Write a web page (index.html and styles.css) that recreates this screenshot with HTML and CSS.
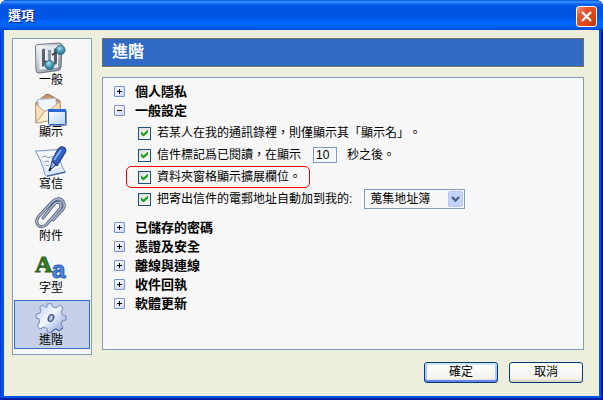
FILE: index.html
```html
<!DOCTYPE html>
<html lang="zh-Hant">
<head>
<meta charset="UTF-8">
<meta name="viewport" content="width=device-width, initial-scale=1.0">
<title>選項</title>
<link rel="stylesheet" href="styles.css">
</head>
<body>
<div class="window">
    <header class="titlebar">
        <h1>選項</h1>
        <button type="button" class="close" aria-label="關閉">
            <svg width="13" height="13" viewBox="0 0 13 13"><path d="M2 2L11 11M11 2L2 11" stroke="#fff" stroke-width="2.4"/></svg>
        </button>
    </header>

    <div class="content">
        <nav class="sidebar">
            <button type="button" class="category">
                <svg width="32" height="32" viewBox="0 0 32 32">
                    <defs>
                        <linearGradient id="metal" x1="0" y1="0" x2="1" y2="1"><stop offset="0" stop-color="#fff"/><stop offset=".5" stop-color="#b9bfca"/><stop offset="1" stop-color="#7c8494"/></linearGradient>
                        <radialGradient id="ball" cx=".4" cy=".3" r=".7"><stop offset="0" stop-color="#b5e2ee"/><stop offset=".5" stop-color="#4fa3bd"/><stop offset="1" stop-color="#2b7592"/></radialGradient>
                    </defs>
                    <path d="M3 2.5L24 1Q27 1 27 4L26 25Q26 28 23 28.5L4 31Q1 31 1 28L.5 5Q.5 3 3 2.5Z" fill="url(#metal)" stroke="#6b7180"/>
                    <path d="M5 5.5L23 4.5 22.5 25 5 27Z" fill="#dfe3ea" stroke="#f6f7fa"/>
                    <path d="M7 9Q7 6 10 7V22Q9 26 7 24ZM19 7Q22 5 22 8V21Q21 24 19 22Z" fill="#596070"/>
                    <path d="M13 8H16V20H13Z" fill="#8f96a5"/>
                    <path d="M11 8V21M17 12V20" stroke="#fff"/>
                    <path d="M17 13L22 10M10 19L13 21" stroke="#383e4a" stroke-width="2"/>
                    <circle cx="25.5" cy="8" r="4.5" fill="url(#ball)" stroke="#2e6a82"/>
                    <circle cx="14.5" cy="23" r="4.5" fill="url(#ball)" stroke="#2e6a82"/>
                </svg>
                <span>一般</span>
            </button>
            <button type="button" class="category">
                <svg width="32" height="32" viewBox="0 0 32 32">
                    <defs>
                        <linearGradient id="pane" x1="0" y1="0" x2="1" y2="1"><stop offset="0" stop-color="#fff"/><stop offset="1" stop-color="#b7d3fa"/></linearGradient>
                    </defs>
                    <path d="M.5 9L11 .5Q13 0 15 1L25 7 25.5 24 1 29Z" fill="#c39472" stroke="#a06f4c"/>
                    <path d="M2.5 5.5L20.5 4.5 23 19 5 22Z" fill="#eef5ff" stroke="#b1c5e3"/>
                    <path d="M.5 9.5L11 19 25 7.5 25.500 25 1 29Z" fill="#f8e0be" stroke="#cf9c6c"/>
                    <path d="M1 28.5L9.5 17.5 13 16 25 24" fill="#fff0d6" stroke="#c99968"/>
                    <path d="M14 31.5H31.5V17" fill="none" stroke="#8a90a0"/>
                    <rect x="13.5" y="15.5" width="17" height="15" rx="1" fill="url(#pane)" stroke="#2464c8"/>
                    <path d="M13 16.5H31" stroke="#2869d6" stroke-width="3"/>
                </svg>
                <span>顯示</span>
            </button>
            <button type="button" class="category">
                <svg width="32" height="32" viewBox="0 0 32 32">
                    <path d="M.5 5L24 3.5Q24 17 30.5 26.5L12 30.5Q9 29 8.5 23 6 14 .5 5Z" fill="#dbe7ff" stroke="#7f98c6"/>
                    <path d="M2 6L22 5Q22 14 26 21L13 25Q9 15 2 6Z" fill="#f8fbff"/>
                    <path d="M12 30L30 26" stroke="#344f86"/>
                    <path d="M7 11Q11 9 12 11T18 10M9 16Q12 14 14 16M11 20L14 19" fill="none" stroke="#7f8cab"/>
                    <path d="M17 14L23 3Q26-1 30 2 32 4 30 7L22 20Z" fill="#2f60c4" stroke="#1b3377"/>
                    <path d="M19 14L26 4" stroke="#88b3f5" stroke-width="2"/>
                    <path d="M17 15L21 19 14.5 24.5Z" fill="#8eaee6" stroke="#253b70"/>
                    <path d="M14 25L16 22" stroke="#111d3d" stroke-width="2"/>
                </svg>
                <span>寫信</span>
            </button>
            <button type="button" class="category">
                <svg width="32" height="32" viewBox="0 0 32 32">
                    <g fill="none" stroke-linecap="round">
                        <path d="M8 20L19 6Q22 3 25 5 27 8 25 11L12 26Q7 31 3 27 0 23 4 18L17 4Q22-1 27 2 31 6 28 11L18 22" stroke="#48536e" stroke-width="3"/>
                        <path d="M8 20L19 6Q22 3 25 5 27 8 25 11L12 26Q7 31 3 27 0 23 4 18L17 4Q22-1 27 2 31 6 28 11L18 22" stroke="#a7b5d1" stroke-width="1.6"/>
                    </g>
                </svg>
                <span>附件</span>
            </button>
            <button type="button" class="category">
                <svg width="32" height="32" viewBox="0 0 32 32">
                    <text class="letter-serif" x="0" y="22">A</text>
                    <text class="letter-sans" x="17" y="28">a</text>
                </svg>
                <span>字型</span>
            </button>
            <button type="button" class="category selected" aria-current="page">
                <svg width="32" height="32" viewBox="0 0 32 32">
                    <defs>
                        <linearGradient id="gear" x1="0" y1="0" x2="1" y2="1"><stop offset="0" stop-color="#b9cdf2"/><stop offset=".45" stop-color="#f2f7ff"/><stop offset="1" stop-color="#7d98d3"/></linearGradient>
                    </defs>
                    <path d="M12 2L16 1.5 18 5 21 6 25 3 28 6 26 10 27.500 13 31 14 31 18 27 19 26 22 28 26 24 29 21 26.5 18 28 16 31 12.5 30 12 26.5 9 25 5 27 2.5 24 4.5 20 4 17 1 16 1.5 12 5 11 6 8.5 4.5 5 8 3 10.5 5.5 12 5Z" fill="url(#gear)" stroke="#7589be" stroke-linejoin="round"/>
                    <path d="M28 26L24 29 21 27 18 28.500 16 31" fill="none" stroke="#465b93"/>
                    <ellipse cx="16" cy="16" rx="2.500" ry="3.500" transform="rotate(25 16 16)" fill="#b9c7e8" stroke="#4e5d86" stroke-width="1.500"/>
                </svg>
                <span>進階</span>
            </button>
        </nav>

        <main class="main">
            <h2 class="heading">進階</h2>
            <div class="panel">
                <details>
                    <summary>個人隱私</summary>
                </details>
                <details open>
                    <summary>一般設定</summary>
                    <div class="settings">
                        <div class="setting">
                            <input type="checkbox" id="displayName" checked>
                            <label for="displayName">若某人在我的通訊錄裡，則僅顯示其「顯示名」。</label>
                        </div>
                        <div class="setting">
                            <input type="checkbox" id="markRead" checked>
                            <label for="markRead">信件標記爲已閱讀，在顯示</label>
                            <input type="text" class="seconds" id="seconds" value="10">
                            <label for="seconds">秒之後。</label>
                        </div>
                        <div class="setting highlight">
                            <input type="checkbox" id="extColumns" checked>
                            <label for="extColumns">資料夾窗格顯示擴展欄位。</label>
                        </div>
                        <div class="setting">
                            <input type="checkbox" id="collect" checked>
                            <label for="collect">把寄出信件的電郵地址自動加到我的:</label>
                            <select class="book" aria-label="地址簿">
                                <option>蒐集地址簿</option>
                            </select>
                        </div>
                    </div>
                </details>
                <details>
                    <summary>已儲存的密碼</summary>
                </details>
                <details>
                    <summary>憑證及安全</summary>
                </details>
                <details>
                    <summary>離線與連線</summary>
                </details>
                <details>
                    <summary>收件回執</summary>
                </details>
                <details>
                    <summary>軟體更新</summary>
                </details>
            </div>
            <div class="actions">
                <button type="button" class="btn default">確定</button>
                <button type="button" class="btn">取消</button>
            </div>
        </main>
    </div>
</div>
</body>
</html>
```

FILE: styles.css
```css
* {
    box-sizing: border-box;
}
body {
    margin: 0;
    background: #fff;
    color: #000;
    font: 12px/14px "Liberation Sans", "Noto Sans CJK TC", sans-serif;
    text-spacing-trim: space-all;
}
button, input, select {
    margin: 0;
    font: inherit;
    color: inherit;
}
.window {
    display: flex;
    flex-direction: column;
    min-height: 100vh;
    padding: 0 4px 4px;
    border-radius: 7px 7px 0 0;
    background: #0054e3;
    box-shadow: inset 1px 0 #0831d9, inset -1px 0 #00138c, inset -2px -2px #001ea0;
}

/* title bar */
.titlebar {
    display: flex;
    align-items: center;
    justify-content: space-between;
    height: 30px;
    margin: 0 -4px;
    padding: 2px 6px 0 8px;
    border-radius: 7px 7px 0 0;
    background: linear-gradient(#0058e0 0, #3a93ff 2px, #0a62f0 4px, #0053e1 7px, #0055e5 18px, #0066ff 22px, #0062f8 27px, #0046cc 30px);
}
.titlebar h1 {
    margin: 0;
    font-size: 13px;
    line-height: 18px;
    color: #fff;
    text-shadow: 1px 1px #0a1883;
}
.close {
    display: flex;
    align-items: center;
    justify-content: center;
    width: 21px;
    height: 21px;
    padding: 0;
    border: 1px solid #fff;
    border-radius: 3px;
    background: linear-gradient(135deg, #f0a088 0, #e5532c 30%, #dc4416 70%, #b83010 100%);
}

.content {
    display: flex;
    flex: 1;
    align-items: flex-start;
    gap: 10px;
    padding: 8px 15px 8px 8px;
    background: #eeeedd;
}

/* category list */
.sidebar {
    display: flex;
    flex-direction: column;
    gap: 3px;
    flex: none;
    width: 80px;
    padding: 1px 1px 5px;
    border: 1px solid #7f9db9;
    background: #f7f7f7;
}
.category {
    display: flex;
    flex-direction: column;
    align-items: center;
    height: 49px;
    padding: 1px 2px 0 0;
    border: 1px solid transparent;
    background: none;
}
.category svg {
    display: block;
    flex: none;
    overflow: visible;
}
.category span {
    line-height: 12px;
}
.category.selected {
    border-color: #316ac5;
    background: #c5cfe8;
}
.letter-serif {
    font: bold 24px "Liberation Serif", serif;
    fill: #398025;
    stroke: #2a6320;
}
.letter-sans {
    font: bold 24px "Liberation Sans", sans-serif;
    fill: #4f8deb;
    stroke: #2659b3;
}

/* right hand side */
.main {
    flex: 1;
    min-width: 0;
}
.heading {
    margin: 0 0 10px;
    padding: 1px 9px 3px;
    border: 1px solid #716f64;
    box-shadow: 0 1px #fff;
    background: #316ac5;
    color: #fff;
    font-size: 16px;
    line-height: 23px;
}
.panel {
    min-height: 273px;
    padding: 4px 11px;
    border: 1px solid #7f9db9;
    background: #f7f7f7;
}
summary {
    display: flex;
    align-items: center;
    gap: 10px;
    font-size: 13px;
    font-weight: bold;
    line-height: 19px;
}
summary::before {
    content: "";
    width: 9px;
    height: 9px;
    border: 1px solid #7b93cd;
    border-radius: 1px;
    background:
        linear-gradient(#000, #000) center / 5px 1px no-repeat,
        linear-gradient(#000, #000) center / 1px 5px no-repeat,
        linear-gradient(135deg, #fff, #cdd6f0);
}
details[open] > summary::before {
    background:
        linear-gradient(#000, #000) center / 5px 1px no-repeat,
        linear-gradient(135deg, #fff, #cdd6f0);
}
.settings {
    display: flex;
    flex-direction: column;
    align-items: flex-start;
    padding: 2px 0 8px 12px;
}
.setting {
    display: flex;
    align-items: center;
    height: 22px;
    padding: 0 8px 0 11px;
    border: 1px solid transparent;
    border-radius: 5px;
    white-space: nowrap;
}
.setting.highlight {
    border-color: #f00;
}
.setting input[type="checkbox"] {
    appearance: none;
    width: 13px;
    height: 13px;
    margin-right: 6px;
    border: 1px solid #1c5180;
    background: linear-gradient(135deg, #dcdcd7, #fff);
}
.setting input[type="checkbox"]:checked::before {
    content: "";
    display: block;
    width: 7px;
    height: 7px;
    margin: 2px;
    background: #21a121;
    clip-path: polygon(0 28%, 36% 58%, 100% 0, 100% 42%, 36% 100%, 0 72%);
}
.seconds {
    width: 24px;
    height: 16px;
    margin: 0 10px 0 12px;
    padding: 0 2px;
    border: 1px solid #7f9db9;
    background: #f7f7f7;
}
.book {
    appearance: none;
    width: 101px;
    height: 20px;
    margin-left: 12px;
    padding: 0 20px 0 5px;
    border: 1px solid #7f9db9;
    background:
        url("data:image/svg+xml,%3Csvg xmlns='http://www.w3.org/2000/svg' width='15' height='16'%3E%3Crect x='.5' y='.5' width='14' height='15' rx='1' fill='%23c3d3fd' stroke='%23b4c8f6'/%3E%3Cpath d='M4 6l3.5 3.5L11 6' fill='none' stroke='%234d6185' stroke-width='2.4'/%3E%3C/svg%3E") right 1px center no-repeat,
        #f7f7f7;
}

.actions {
    display: flex;
    justify-content: flex-end;
    gap: 11px;
    padding: 12px 1px 0 0;
}
.btn {
    width: 74px;
    height: 21px;
    padding: 0 0 2px;
    border: 1px solid #003c74;
    border-radius: 3px;
    background: linear-gradient(#fff, #f3f3ee 80%, #d6d0c5);
}
.btn.default {
    box-shadow: inset 0 2px #cee7ff, inset 0 -2px #6982ee, inset 2px 0 #aec8f5, inset -2px 0 #aec8f5;
}
```
